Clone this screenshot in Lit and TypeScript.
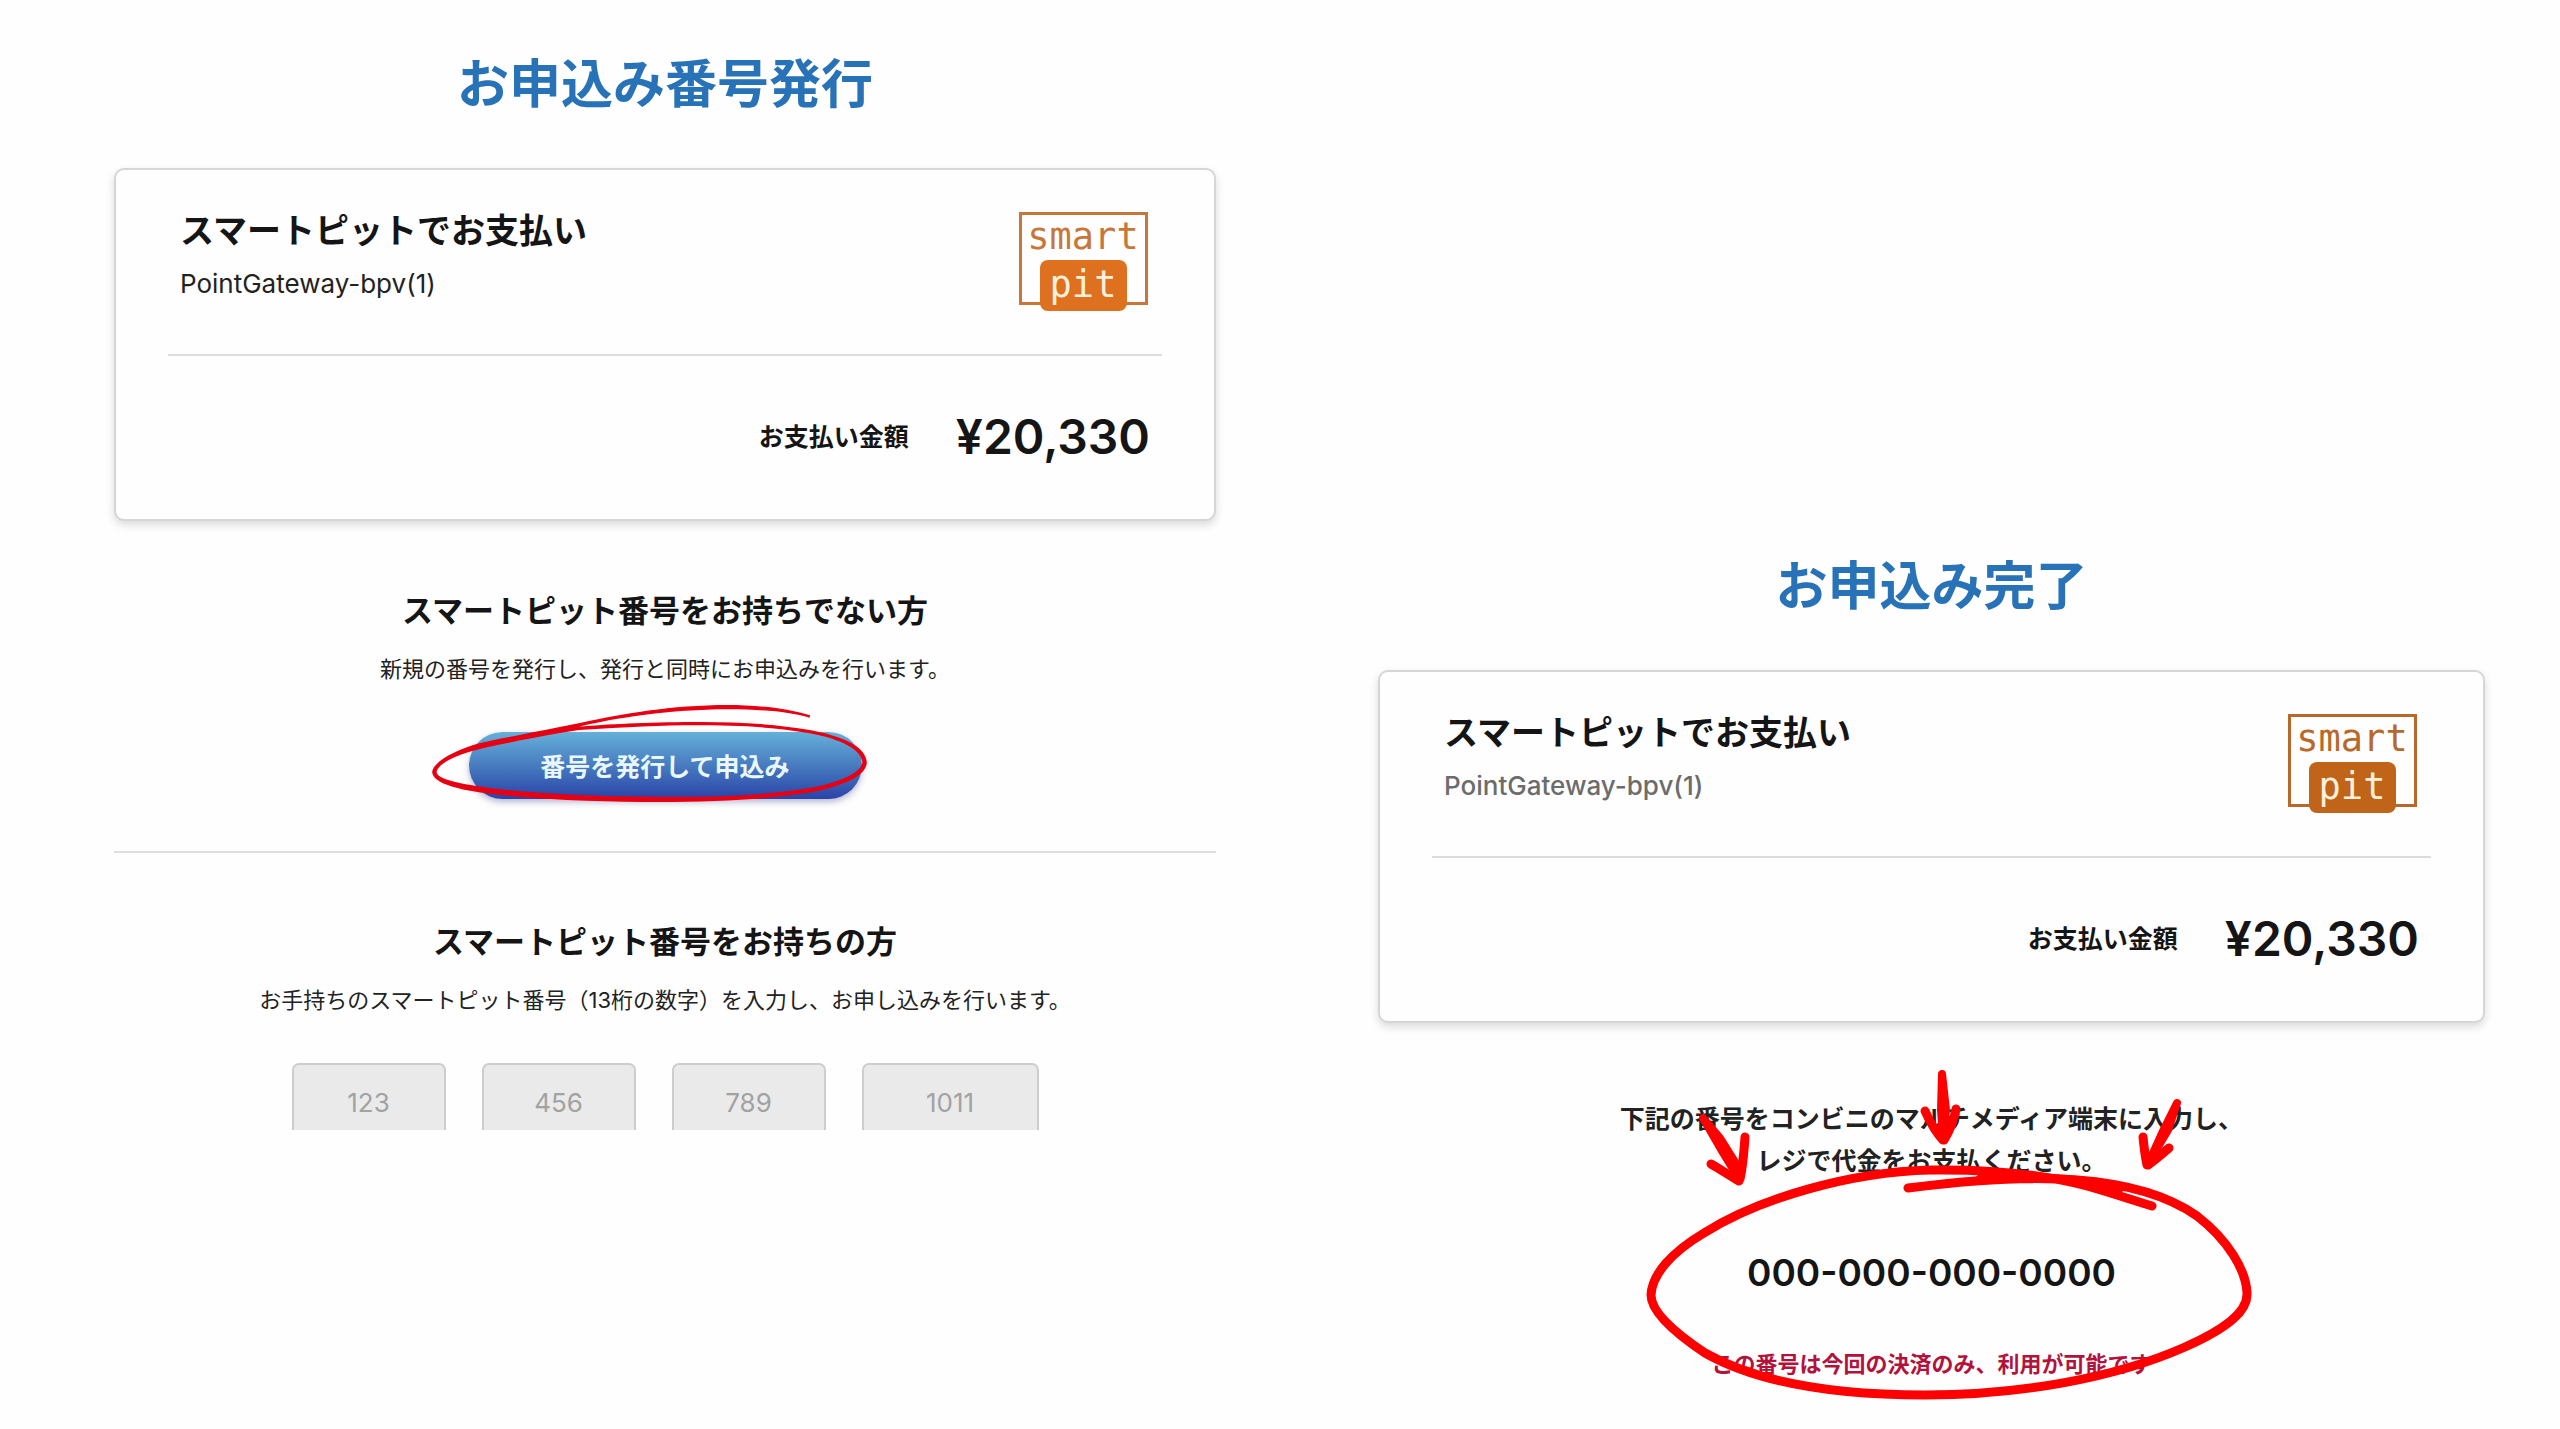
import { LitElement, html, css, svg } from "lit";
import { customElement, property } from "lit/decorators.js";

@customElement("smartpit-logo")
export class SmartpitLogo extends LitElement {
  @property() tone = "#dd7120";
  @property() line = "#c8773a";

  static styles = css`
    :host { display: block; flex: none; }
    svg { display: block; }
    text { font-family: "DejaVu Sans Mono", monospace; font-size: 37px; }
  `;

  render() {
    return html`
      <svg width="129" height="99" viewBox="0 0 129 99" role="img" aria-label="smart pit">
        <rect x="1.5" y="1.5" width="126" height="90" fill="none" stroke=${this.line} stroke-width="3"></rect>
        <text x="64" y="37" text-anchor="middle" fill=${this.line}>smart</text>
        <rect x="21" y="48" width="87" height="51" rx="8" fill=${this.tone}></rect>
        <text x="64" y="85" text-anchor="middle" fill="#fdf0dc">pit</text>
      </svg>
    `;
  }
}

@customElement("payment-card")
export class PaymentCard extends LitElement {
  @property() heading = "";
  @property() merchant = "";
  @property() amount = "";
  @property() tone = "";
  @property() line = "";

  static styles = css`
    :host {
      display: block;
      border: 2px solid #d6d6d6;
      border-radius: 10px;
      background: #fefefe;
      box-shadow: 0 4px 8px rgba(0, 0, 0, 0.14);
      padding: 0 52px;
    }
    .head {
      display: flex;
      justify-content: space-between;
      align-items: flex-start;
      padding: 37px 14px 43px 12px;
      border-bottom: 2px solid #dcdcdc;
    }
    .names { display: grid; gap: 9px; }
    h2 { margin: 0; font-size: 34px; line-height: 48px; font-weight: 700; }
    .merchant { margin: 0; font-size: 26px; line-height: 40px; color: var(--merchant-color, #222); font-weight: var(--merchant-weight, 400); }
    smartpit-logo { margin-top: 5px; }
    .total {
      display: flex;
      justify-content: flex-end;
      align-items: center;
      gap: 47px;
      margin: 0;
      padding: 51px 12px 52px;
    }
    dt { font-size: 25px; line-height: 60px; font-weight: 700; }
    dd { margin: 0; font-size: 48px; line-height: 60px; font-weight: 600; }
  `;

  render() {
    return html`
      <div class="head">
        <div class="names">
          <h2>${this.heading}</h2>
          <p class="merchant">${this.merchant}</p>
        </div>
        <smartpit-logo .tone=${this.tone} .line=${this.line}></smartpit-logo>
      </div>
      <dl class="total">
        <dt>お支払い金額</dt>
        <dd>${this.amount}</dd>
      </dl>
    `;
  }
}

const buttonMark = svg`
  <path d="M1101 436 C1040 412 960 405 900 405 C760 405 640 432 540 458 C470 476 340 505 290 520
    C220 545 176 580 175 607 C178 650 280 668 350 676 C480 692 620 696 730 696
    C900 696 1050 682 1130 660 C1200 640 1240 610 1240 577 C1238 530 1180 498 1100 480
    C1010 460 900 455 815 456 C700 457 600 463 535 470 L535 480
    C650 472 740 466 820 466 C920 466 1010 470 1100 490 C1180 508 1226 540 1229 577
    C1228 605 1180 635 1110 652 C1000 676 880 681 730 680 C560 680 430 670 330 656
    C240 642 188 628 186 607 C188 580 240 550 310 532 C400 508 470 492 535 480
    L535 470 C620 445 760 418 900 418 C980 418 1050 425 1100 443 Z"></path>
`;

const numberMarks = svg`
  <g class="ring">
    <path d="M308 138 C370 130 430 126 477 130 C530 134 570 147 597 166 C628 190 646 220 647 243
      C648 260 630 277 585 297 C515 328 420 345 325 345 C240 345 160 334 105 303
      C75 283 51 262 51 245 C52 224 72 202 104 183 C160 148 250 122 330 120
      C400 119 450 126 487 136 C515 144 535 151 552 156"></path>
    <path d="M380 129 C430 126 480 128 520 138"></path>
  </g>
  <g class="arrow">
    <path class="shaft" d="M103 68 L122 101 L139 129 L135 112 L120 88 Z"></path>
    <path d="M111 114 C120 119 130 126 139 131 M145 87 C144 102 143 116 140 129"></path>
    <path class="shaft" d="M342 24 L341 60 L343 88 L346 60 Z"></path>
    <path d="M325 61 C330 72 337 84 343 90 M356 59 C354 70 349 82 344 90"></path>
    <path class="shaft" d="M577 53 L564 79 L549 112 L568 80 Z"></path>
    <path d="M543 87 C544 97 545 106 547 115 M569 98 C562 104 555 110 548 115"></path>
  </g>
`;

@customElement("app-root")
export class AppRoot extends LitElement {
  static styles = css`
    :host {
      display: block;
      min-height: 100vh;
      background: #fefefe;
      color: #151515;
      font-family: Inter, "Noto Sans CJK JP", sans-serif;
    }
    main {
      display: grid;
      grid-template-columns: 1102fr 1107fr;
      column-gap: 162px;
      align-items: start;
      padding: 55px 75px 40px 114px;
    }
    .done { padding-top: 502px; --merchant-color: #6c6c6c; --merchant-weight: 500; }
    h1 {
      margin: 0 0 53px;
      text-align: center;
      font-size: 52px;
      line-height: 60px;
      font-weight: 700;
      color: #2872b8;
    }
    section { display: flex; flex-direction: column; align-items: center; }
    .new { padding: 68px 0 52px; border-bottom: 2px solid #dedede; }
    .existing { padding-top: 67px; }
    h2 { margin: 0 0 20px; font-size: 31px; line-height: 44px; font-weight: 700; }
    .lead { margin: 0 0 47px; font-size: 22px; line-height: 32px; color: #222; }
    .issue { position: relative; display: flex; }
    .issue svg { position: absolute; left: -43px; top: -32px; fill: #e60012; pointer-events: none; }
    button {
      width: 393px;
      height: 67px;
      padding: 0 0 2px;
      border: 0;
      border-radius: 34px;
      background: linear-gradient(#65b0da, #4679be 52%, #2a43a8);
      box-shadow: 0 3px 6px rgba(50, 50, 130, 0.35);
      color: #e9f8ff;
      font: inherit;
      font-size: 25px;
      font-weight: 700;
    }
    .digits {
      display: flex;
      align-items: flex-start;
      gap: 36px;
      height: 67px;
      overflow: hidden;
    }
    input {
      box-sizing: border-box;
      width: 154px;
      height: 78px;
      padding: 0;
      border: 2px solid #cdcdcd;
      border-radius: 7px;
      background: #eaeaea;
      text-align: center;
      font: inherit;
      font-size: 26px;
    }
    input.wide { width: 177px; }
    input::placeholder { color: #a2a2a2; opacity: 1; }
    .result { position: relative; padding-top: 75px; }
    .result p { margin: 0; text-align: center; font-weight: 700; }
    .guide { font-size: 25px; line-height: 42px; color: #222; }
    .result .number { margin: 66px 0 50px; font-size: 37px; line-height: 50px; font-weight: 600; }
    .note { font-size: 22px; line-height: 32px; color: #b3123d; }
    .result svg {
      position: absolute;
      top: 37px;
      left: calc(50% - 292px);
      fill: none;
      stroke: #fe0000;
      stroke-linecap: round;
      stroke-linejoin: round;
      pointer-events: none;
    }
    .ring { stroke-width: 9px; }
    .arrow { stroke-width: 9px; }
    .shaft { stroke-width: 8px; fill: #fe0000; }
  `;

  render() {
    return html`
      <main lang="ja">
        <div>
          <h1>お申込み番号発行</h1>
          <payment-card heading="スマートピットでお支払い" merchant="PointGateway-bpv(1)" amount="¥20,330" tone="#dd7120" line="#c8773a"></payment-card>
          <section class="new">
            <h2>スマートピット番号をお持ちでない方</h2>
            <p class="lead">新規の番号を発行し、発行と同時にお申込みを行います。</p>
            <div class="issue">
              <button type="button">番号を発行して申込み</button>
              <svg width="449" height="107" viewBox="160 390 1100 321" preserveAspectRatio="none" aria-hidden="true">${buttonMark}</svg>
            </div>
          </section>
          <section class="existing">
            <h2>スマートピット番号をお持ちの方</h2>
            <p class="lead">お手持ちのスマートピット番号（13桁の数字）を入力し、お申し込みを行います。</p>
            <div class="digits">
              ${["123", "456", "789", "1011"].map(
                (sample, i) => html`<input
                  class=${sample.length > 3 ? "wide" : ""}
                  type="text"
                  inputmode="numeric"
                  maxlength=${sample.length}
                  placeholder=${sample}
                  aria-label=${`スマートピット番号 ${i + 1}`}
                />`
              )}
            </div>
          </section>
        </div>
        <div class="done">
          <h1>お申込み完了</h1>
          <payment-card heading="スマートピットでお支払い" merchant="PointGateway-bpv(1)" amount="¥20,330" tone="#bf6418" line="#b8682a"></payment-card>
          <section class="result">
            <p class="guide">下記の番号をコンビニのマルチメディア端末に入力し、<br />レジで代金をお支払ください。</p>
            <p class="number">000-000-000-0000</p>
            <p class="note">この番号は今回の決済のみ、利用が可能です</p>
            <svg width="620" height="345" viewBox="40 10 620 345" aria-hidden="true">${numberMarks}</svg>
          </section>
        </div>
      </main>
    `;
  }
}
